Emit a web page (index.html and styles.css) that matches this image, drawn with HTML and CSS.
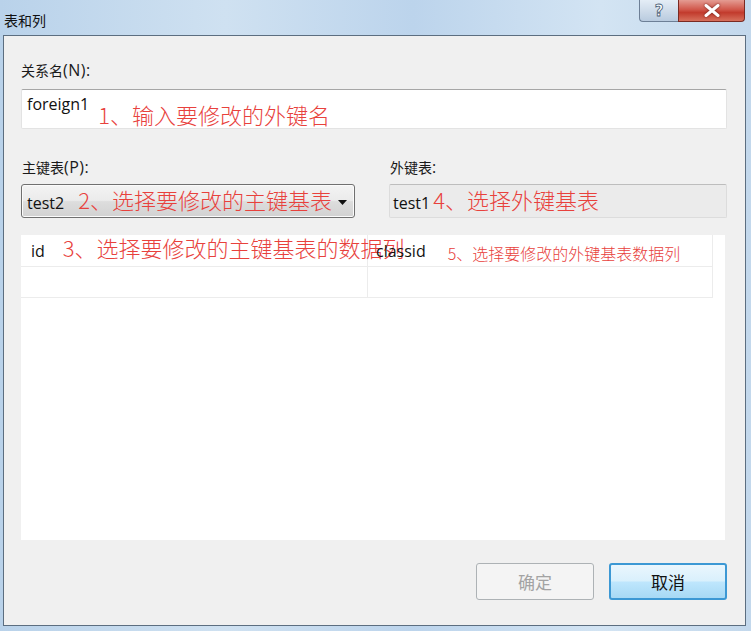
FILE: index.html
```html
<!DOCTYPE html>
<html lang="zh-CN">
<head>
<meta charset="utf-8">
<title>表和列</title>
<link rel="stylesheet" href="styles.css">
</head>
<body>
<div class="window">
  <div class="titlebar">
    <span class="title">表和列</span>
    <div class="controls">
      <span class="ctl help">?</span>
      <span class="ctl close">
        <svg width="16" height="13" viewBox="0 0 16 13"><path d="M2 1.5 L14 11.5 M14 1.5 L2 11.5" stroke="#fff" stroke-width="3" stroke-linecap="round"/></svg>
      </span>
    </div>
  </div>
  <div class="client">
    <div class="label"><span class="cj">关系名</span>(N):</div>
    <div class="textbox">
      <span class="val">foreign1</span>
      <span class="note note-1">1、输入要修改的外键名</span>
    </div>
    <div class="pair">
      <div class="col">
        <div class="label"><span class="cj">主键表</span>(P):</div>
        <div class="combo">
          <span class="val">test2</span>
          <span class="note note-2">2、选择要修改的主键基表</span>
          <svg class="arrow" width="9" height="5" viewBox="0 0 9 5"><path d="M0 0 H9 L4.5 5 Z" fill="#111"/></svg>
        </div>
      </div>
      <div class="col">
        <div class="label"><span class="cj">外键表</span>:</div>
        <div class="readonly">
          <span class="val">test1</span>
          <span class="note note-4">4、选择外键基表</span>
        </div>
      </div>
    </div>
    <div class="grid">
      <div class="cells">
        <div class="cell c1"><span class="val">id</span><span class="note note-3">3、选择要修改的主键基表的数据列</span></div>
        <div class="cell c2"><span class="val">classid</span><span class="note note-5">5、选择要修改的外键基表数据列</span></div>
        <div class="cell c1 r2"></div>
        <div class="cell c2 r2"></div>
      </div>
    </div>
    <div class="buttons">
      <button class="btn disabled">确定</button>
      <button class="btn primary">取消</button>
    </div>
  </div>
</div>
</body>
</html>
```
FILE: styles.css
```css
* { box-sizing: border-box; }
html, body { margin: 0; padding: 0; }
body {
  width: 751px;
  height: 631px;
  overflow: hidden;
  background: #c9dcee;
  font-family: "Open Sans", "Noto Sans CJK SC", sans-serif;
  color: #111;
}
.window {
  height: 631px;
  display: flex;
  flex-direction: column;
  background: linear-gradient(90deg, #b9d2ea 0%, #cfe1f1 30%, #bcd4ec 55%, #d3e4f3 80%, #c3d8ec 100%);
}
.titlebar {
  height: 35px;
  display: flex;
  align-items: flex-start;
  padding-left: 4px;
}
.title {
  font-family: "Noto Sans CJK SC", sans-serif;
  font-size: 14px;
  line-height: 18px;
  margin-top: 11px;
  color: #111;
}
.controls {
  margin-left: auto;
  margin-right: 6px;
  display: flex;
}
.ctl {
  height: 22px;
  display: flex;
  align-items: center;
  justify-content: center;
  border: 1px solid #6d7f96;
  border-top: none;
}
.help {
  width: 39px;
  border-radius: 0 0 0 4px;
  border-right: none;
  background: linear-gradient(180deg, #e4edf6 0%, #cfdcea 50%, #b9cbdf 100%);
  font-family: "DejaVu Sans", sans-serif;
  font-size: 15px;
  color: #fff;
  font-weight: bold;
  -webkit-text-stroke: 0.8px #4a5d75;
}
.close {
  width: 67px;
  border-radius: 0 0 4px 0;
  background: linear-gradient(180deg, #e49c92 0%, #d1584b 45%, #c23b2d 60%, #d7705c 100%);
  border-color: #7a2a22;
}
.close svg { filter: drop-shadow(0 0 1px #6a1c14); }
.client {
  flex: 1;
  margin: 0 5px 5px 3px;
  border: 1px solid #5c6e80;
  background: #f0f0f0;
  padding: 24px 18px 0 17px;
  display: flex;
  flex-direction: column;
}
.label {
  font-family: "Open Sans", "Noto Sans CJK SC", sans-serif;
  font-size: 16px;
  line-height: 20px;
  color: #1a1a1a;
  white-space: nowrap;
  letter-spacing: 0.5px;
}
.cj {
  font-family: "Noto Sans CJK SC", sans-serif;
  font-size: 14px;
  letter-spacing: 0;
}
.val {
  font-family: "Open Sans", "Noto Sans CJK SC", sans-serif;
  font-size: 16px;
  line-height: 20px;
  color: #111;
  white-space: nowrap;
}
.note {
  font-family: "Noto Sans CJK SC", sans-serif;
  color: #e8413c;
  white-space: nowrap;
  font-weight: 300;
}
.textbox {
  margin-top: 9px;
  height: 40px;
  background: #fff;
  border: 1px solid #e3e3e3;
  border-top-color: #a6a6a6;
  border-radius: 2px;
  display: flex;
  align-items: flex-start;
  padding-left: 5px;
}
.textbox .val { margin-top: 4px; }
.note-1 { font-size: 22px; line-height: 26px; margin-top: 11px; margin-left: 9px; }
.pair {
  margin-top: 28px;
  display: grid;
  grid-template-columns: 334px 1fr;
  column-gap: 34px;
}
.pair .label { padding-left: 1px; }
.combo {
  margin-top: 7px;
  height: 34px;
  border: 1px solid #707070;
  border-radius: 3px;
  background: linear-gradient(180deg, #f3f3f3 0%, #ebebeb 48%, #dddddd 52%, #d2d2d2 100%);
  display: flex;
  align-items: center;
  padding-left: 5px;
  box-shadow: inset 0 0 0 1px #fbfbfb;
}
.combo .val { margin-top: 3px; }
.note-2 { font-size: 22px; line-height: 26px; margin-left: 14px; margin-top: -5px; }
.arrow { margin-left: auto; margin-right: 7px; margin-top: 3px; }
.readonly {
  margin-top: 7px;
  height: 34px;
  border: 1px solid #dcdcdc;
  border-top-color: #bdbdbd;
  border-radius: 2px;
  background: #ebebeb;
  display: flex;
  align-items: center;
  padding-left: 3px;
}
.readonly .val { margin-top: 3px; }
.note-4 { font-size: 22px; line-height: 26px; margin-left: 3px; margin-top: -5px; }
.grid {
  margin-top: 17px;
  height: 305px;
  background: #fff;
  margin-right: 2px;
}
.cells {
  display: grid;
  grid-template-columns: 347px 345px;
}
.cell {
  height: 32px;
  border-bottom: 1px solid #ececec;
  border-right: 1px solid #ececec;
  display: flex;
  align-items: center;
  padding-left: 10px;
}
.r2 { height: 31px; }
.c2 { padding-left: 8px; }
.note-3 { font-size: 22px; line-height: 26px; margin-left: 18px; margin-top: -7px; }
.note-5 { font-size: 16px; line-height: 20px; margin-left: 22px; margin-top: 4px; }
.buttons {
  margin-top: 23px;
  display: flex;
  justify-content: flex-end;
  gap: 15px;
}
.btn {
  width: 118px;
  height: 37px;
  border-radius: 3px;
  font-family: "Noto Sans CJK SC", sans-serif;
  font-size: 17px;
  padding: 0;
}
.disabled {
  border: 1px solid #adb2b5;
  background: #f4f4f4;
  color: #a3a3a3;
}
.primary {
  border: 2px solid #3c98d4;
  background: linear-gradient(180deg, #eaf6fd 0%, #d9f0fc 48%, #bee6fd 52%, #a7d9f5 100%);
  color: #111;
}
```
